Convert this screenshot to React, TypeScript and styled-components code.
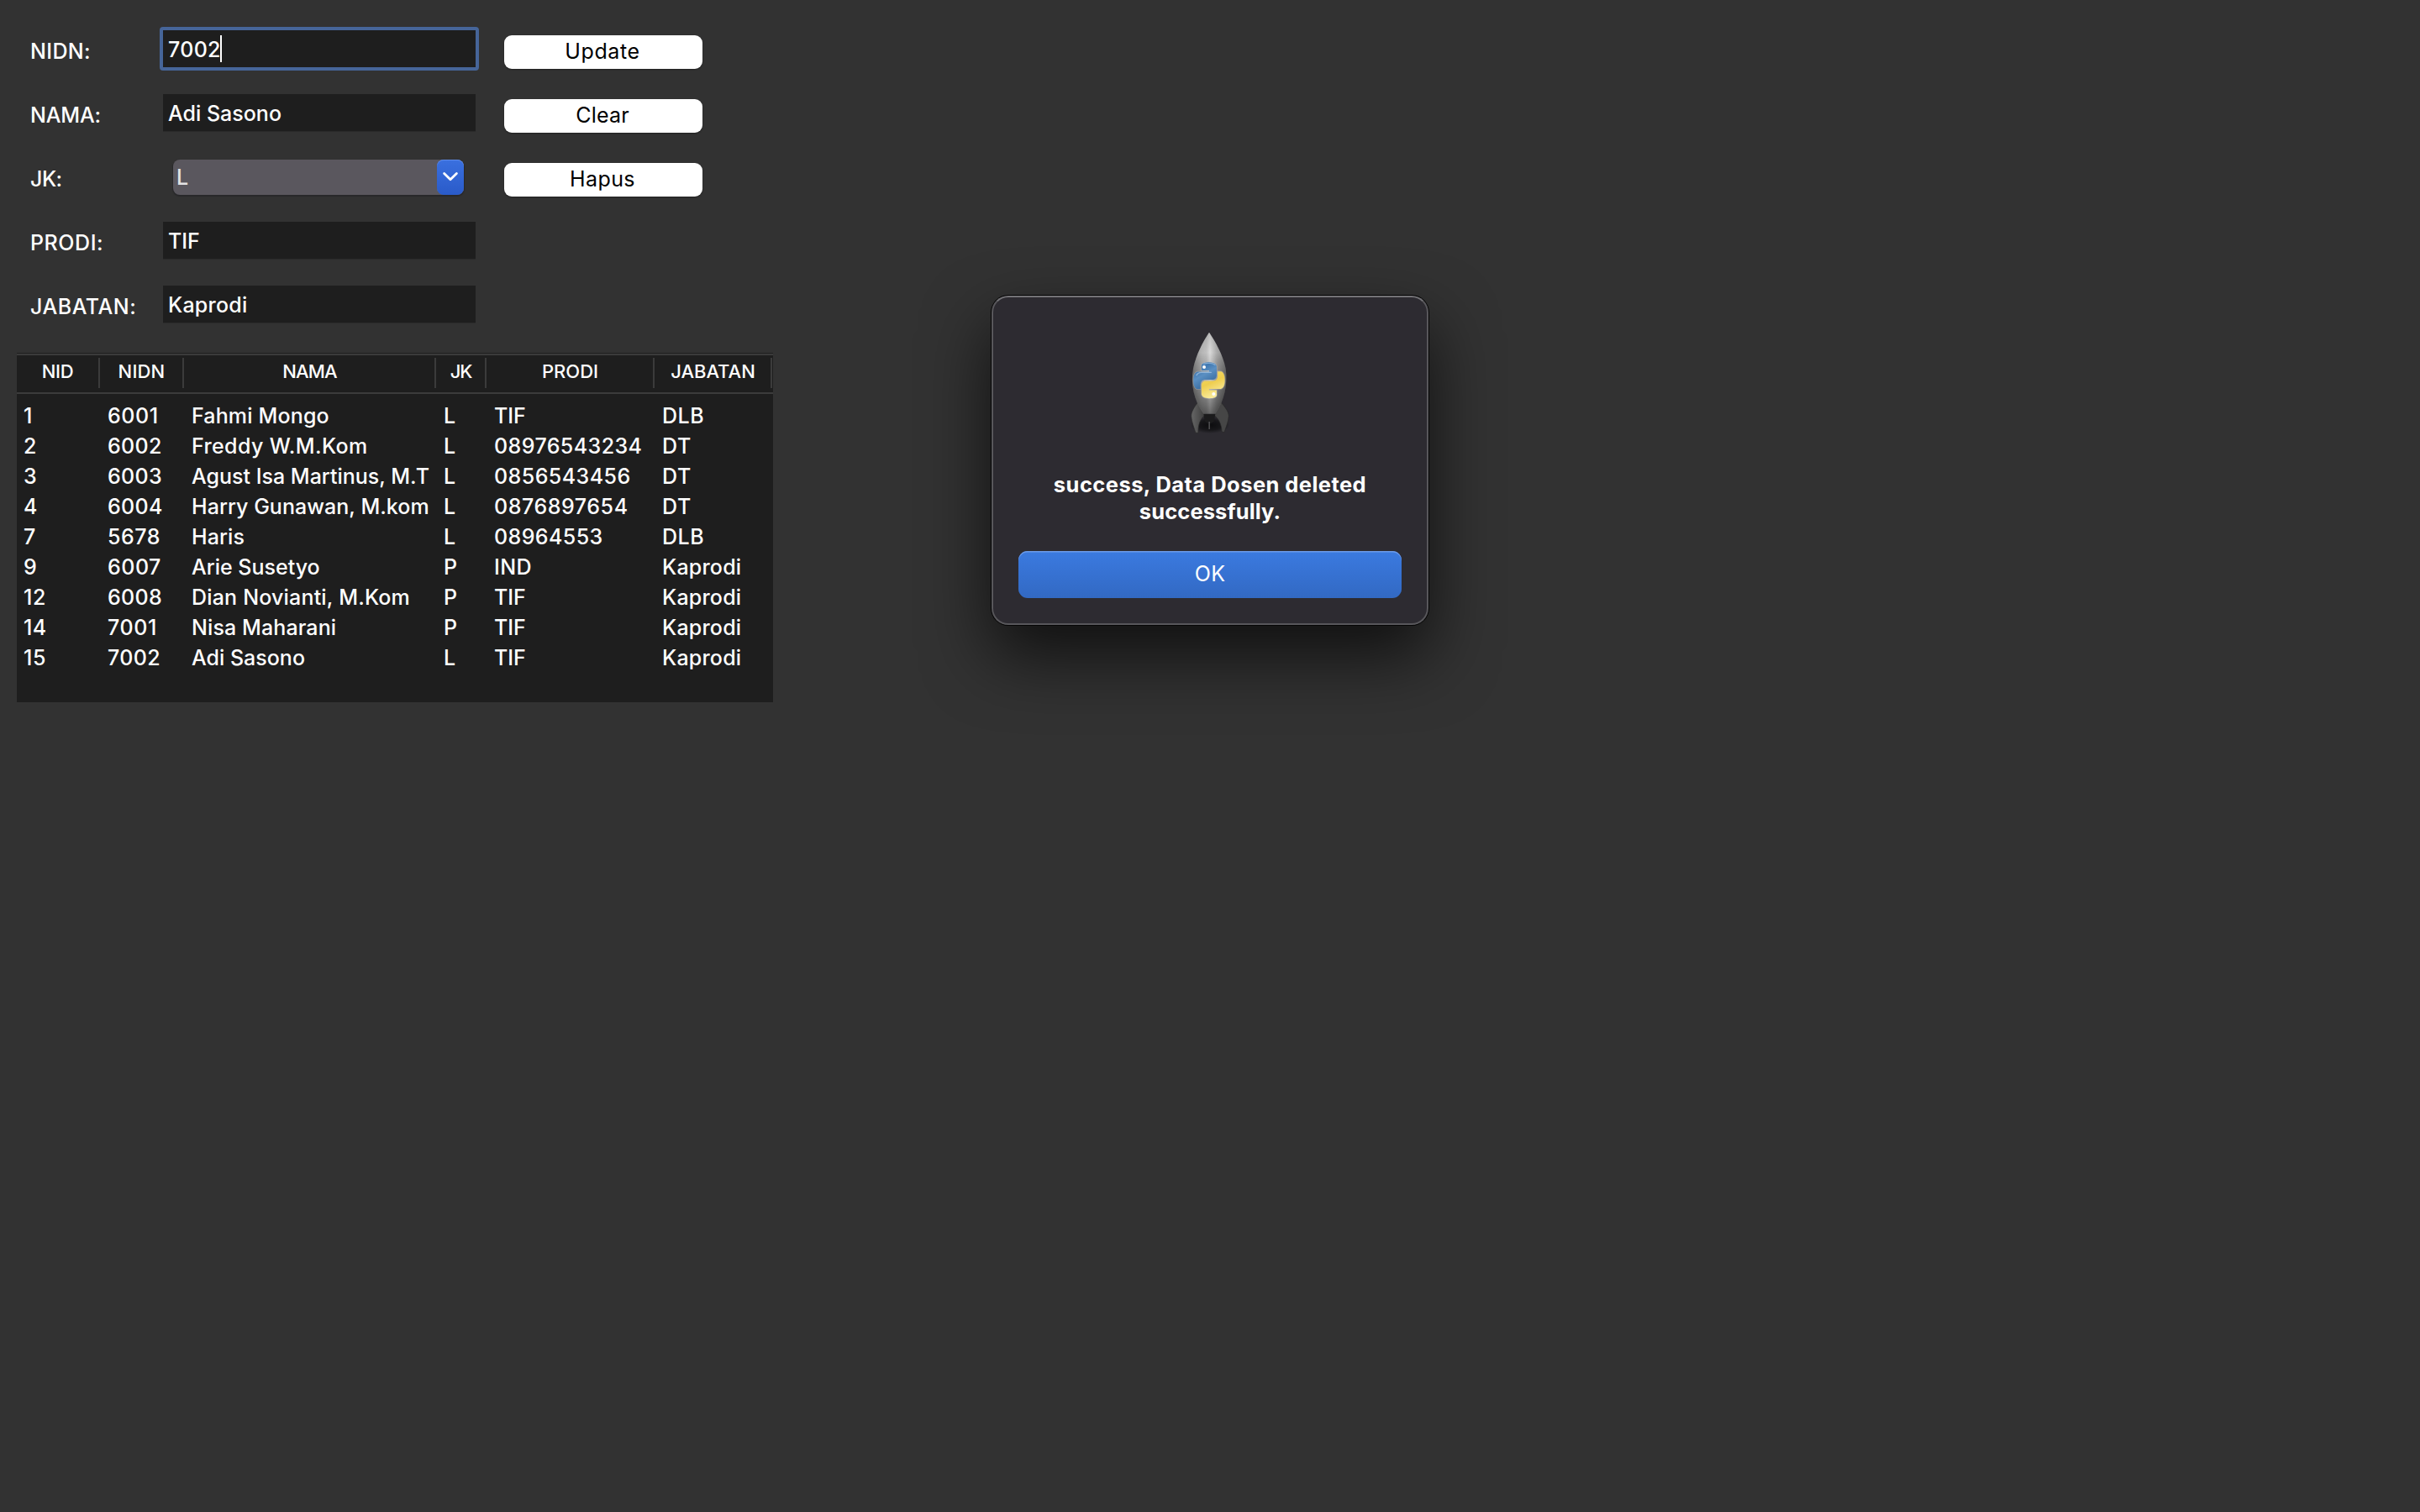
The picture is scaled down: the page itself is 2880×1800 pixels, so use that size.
import React from 'react';
import styled, { createGlobalStyle } from 'styled-components';

const GlobalStyle = createGlobalStyle`
  * { box-sizing: border-box; }
  html, body { margin: 0; background: #323232; }
  body {
    font-family: Inter, "Liberation Sans", sans-serif;
    font-size: 25px;
    font-weight: 500;
    color: #fff;
    overflow: hidden;
  }
`;

const Window = styled.main`
  position: relative;
  width: 2880px;
  height: 1800px;
  padding: 20px 0 0 20px;
  background: #323232;
`;

const Form = styled.form`
  display: flex;
  flex-direction: column;
  margin-bottom: 20px;
`;

const FormRow = styled.div`
  display: flex;
  align-items: center;
  height: 76px;
  padding-left: 16px;
`;

const Tracked = styled.span<{ $track?: number }>`
  letter-spacing: ${(p) => p.$track ?? 0}px;
`;

const Label = styled.label`
  width: 158px;
  line-height: 40px;
  padding-top: 5px;
  white-space: nowrap;
`;

const FieldSlot = styled.div`
  display: flex;
  width: 372px;
  margin-right: 34px;
`;

const Entry = styled.div<{ $focused?: boolean }>`
  display: flex;
  align-items: center;
  width: ${(p) => (p.$focused ? 380 : 372)}px;
  height: ${(p) => (p.$focused ? 52 : 45)}px;
  margin: ${(p) => (p.$focused ? '0 -4px' : '1px 0 0')};
  padding: 2px 0 0 6px;
  background: #1e1e1e;
  border: 0 solid #2a2a2a;
  border-bottom-width: 1px;
  ${(p) => p.$focused && 'border: 4px solid #466599; border-radius: 4px;'}
`;

const Caret = styled.i`
  width: 2px;
  height: 32px;
  margin: -2px 0 0 -1px;
  background: #fff;
`;

const Combo = styled.div`
  display: flex;
  justify-content: space-between;
  width: 346px;
  height: 42px;
  margin: 2px 0 0 12px;
  padding-left: 4px;
  line-height: 42px;
  color: #e3e2e4;
  background: #5a575e;
  border-radius: 8px;
  box-shadow: 0 1px 1px 1px #28282a;
`;

const ComboArrow = styled.span`
  display: grid;
  place-items: center;
  width: 32px;
  height: 42px;
  border-radius: 8px;
  background: linear-gradient(#3a70df, #2a5bc9);
  box-shadow: inset 0 1px 0 #5e8ae6;
`;

const PushButton = styled.button`
  width: 236px;
  height: 40px;
  margin-top: 8px;
  padding: 0 2px 2px 0;
  border: 0;
  border-radius: 9px;
  background: #fff;
  color: #000;
  font: inherit;
  font-weight: 400;
  line-height: 37px;
  box-shadow: 0 1px 2px rgba(0, 0, 0, 0.35);
`;

const Table = styled.section`
  width: 900px;
  height: 416px;
  background: #1e1e1e;
`;

const gridColumns = '100px 100px 300px 60px 200px 140px';

const HeaderRow = styled.div`
  display: grid;
  grid-template-columns: ${gridColumns};
  height: 49px;
  padding-top: 3px;
  border-top: 1px solid #1e1e1e;
  border-bottom: 2px solid #3b3b3b;
  box-shadow: inset 0 2px 0 #3b3b3b;
`;

const HeaderCell = styled.div`
  height: 36px;
  margin: 2px 1px 0 0;
  border-right: 2px solid #3b3b3b;
  font-size: 22px;
  line-height: 32px;
  text-align: center;
`;

const Body = styled.div`
  padding-top: 8px;
`;

const Row = styled.div`
  display: grid;
  grid-template-columns: ${gridColumns};
  height: 36px;
  line-height: 36px;
`;

const Cell = styled.div`
  padding-left: 8px;
  white-space: nowrap;
  overflow: hidden;
`;

const DialogLayer = styled.div`
  position: absolute;
  inset: 0;
  display: flex;
  justify-content: center;
  align-items: flex-start;
  padding-top: 352px;
`;

const Dialog = styled.div`
  display: flex;
  flex-direction: column;
  align-items: center;
  width: 520px;
  height: 392px;
  padding-top: 26px;
  border: 2px solid #58575b;
  border-top-color: #737276;
  border-radius: 20px;
  background: #2d2b31;
  box-shadow: 0 0 0 1px #050505, 0 36px 80px rgba(0, 0, 0, 0.68);
`;

const Message = styled.p`
  display: flex;
  flex-direction: column;
  align-items: center;
  margin: 31px 0 31px;
  font-size: 25.5px;
  font-weight: 700;
  line-height: 32px;
  white-space: nowrap;
`;

const OkButton = styled.button`
  width: 456px;
  height: 56px;
  padding: 0 0 2px;
  border: 0;
  border-radius: 11px;
  background: linear-gradient(#3b7ae0, #3269c3);
  box-shadow: inset 0 1.5px 0 #6c9be9;
  color: #fff;
  font: inherit;
  font-weight: 400;
`;

function ChevronDown() {
  return (
    <svg width="20" height="14" viewBox="0 0 20 14" fill="none">
      <path d="M2.6 2.6 L10 9.8 L17.4 2.6" stroke="#fff" strokeWidth="2.8" strokeLinecap="round" strokeLinejoin="round" />
    </svg>
  );
}

const hullPath =
  'M117 47 C96 78 70 126 60 176 C50 232 62 290 98 338 L138 338 C172 290 184 232 176 176 C166 126 138 78 117 47 Z';

function RocketIcon() {
  return (
    <svg width="80" height="150" viewBox="0 0 240 450">
      <defs>
        <linearGradient id="hull" x1="0" x2="1" y1="0" y2="0">
          <stop offset="0" stopColor="#707070" />
          <stop offset="0.28" stopColor="#a2a2a2" />
          <stop offset="0.42" stopColor="#b0b0b0" />
          <stop offset="0.52" stopColor="#cfcfcf" />
          <stop offset="0.72" stopColor="#939393" />
          <stop offset="1" stopColor="#606060" />
        </linearGradient>
        <linearGradient id="shade" x1="0" x2="0" y1="0" y2="1">
          <stop offset="0" stopColor="#999" stopOpacity="0.35" />
          <stop offset="0.25" stopColor="#fff" stopOpacity="0.22" />
          <stop offset="0.6" stopColor="#000" stopOpacity="0.06" />
          <stop offset="1" stopColor="#000" stopOpacity="0.5" />
        </linearGradient>
        <linearGradient id="finL" x1="0" x2="1" y1="0" y2="0">
          <stop offset="0" stopColor="#666" />
          <stop offset="1" stopColor="#3a3a3a" />
        </linearGradient>
        <linearGradient id="snakeBlue" x1="0" x2="0.5" y1="0" y2="1">
          <stop offset="0" stopColor="#6b9dcd" />
          <stop offset="0.3" stopColor="#3f77b0" />
          <stop offset="0.55" stopColor="#5a8fc2" />
          <stop offset="1" stopColor="#35689c" />
        </linearGradient>
        <linearGradient id="snakeYellow" x1="0" x2="0.4" y1="0" y2="1">
          <stop offset="0" stopColor="#f6de6c" />
          <stop offset="0.5" stopColor="#eecd4e" />
          <stop offset="1" stopColor="#f9eb9c" />
        </linearGradient>
        <radialGradient id="ground">
          <stop offset="0" stopColor="#0c0c0e" />
          <stop offset="0.6" stopColor="#121214" stopOpacity="0.8" />
          <stop offset="1" stopColor="#121214" stopOpacity="0" />
        </radialGradient>
      </defs>
      <ellipse cx="120" cy="378" rx="70" ry="30" fill="url(#ground)" />
      <path d="M76 298 C62 316 53 332 53 346 C54 366 64 390 69 406 L78 406 C77 380 84 354 104 342 L104 320 Z" fill="url(#finL)" stroke="#2a2a2a" strokeWidth="2" />
      <path d="M160 298 C176 316 187 332 187 346 C186 366 176 388 171 404 L162 402 C161 376 152 354 132 342 L132 320 Z" fill="#464646" stroke="#262626" strokeWidth="2" />
      <path d={hullPath} fill="url(#hull)" />
      <path d={hullPath} fill="url(#shade)" />
      <path d="M97 338 L139 338 L134 366 L124 371 L111 371 L102 366 Z" fill="#1b1b1c" />
      <rect x="115" y="366" width="5" height="27" fill="#4b4b4d" />
      <g transform="translate(61 154) scale(4.65 5.35)" stroke="#c0c0c0" strokeOpacity="0.4" strokeWidth="0.9" paintOrder="stroke">
        <path fill="url(#snakeBlue)" d="M14.25.18l.9.2.73.26.59.3.45.32.34.34.25.34.16.33.1.3.04.26.02.2-.01.13V8.5l-.05.63-.13.55-.21.46-.26.38-.3.31-.33.25-.35.19-.35.14-.33.1-.3.07-.26.04-.21.02H8.77l-.69.05-.59.14-.5.22-.41.27-.33.32-.27.35-.2.36-.15.37-.1.35-.07.32-.04.27-.02.21v3.06H3.17l-.21-.03-.28-.07-.32-.12-.35-.18-.36-.26-.36-.36-.35-.46-.32-.59-.28-.73-.21-.88-.14-1.05-.05-1.23.06-1.22.16-1.04.24-.87.32-.71.36-.57.4-.44.42-.33.42-.24.4-.16.36-.1.32-.05.24-.01h.16l.06.01h8.16v-.83H6.18l-.01-2.75-.02-.37.05-.34.11-.31.17-.28.25-.26.31-.23.38-.2.44-.18.51-.15.58-.12.64-.1.71-.06.77-.04.84-.02 1.27.05z" />
        <path fill="url(#snakeYellow)" d="M21.04 6.11l.28.06.32.12.35.18.36.27.36.35.35.47.32.59.28.73.21.88.14 1.04.05 1.23-.06 1.23-.16 1.04-.24.86-.32.71-.36.57-.4.45-.42.33-.42.24-.4.16-.36.09-.32.05-.24.02-.16-.01h-8.22v.82h5.84l.01 2.76.02.36-.05.34-.11.31-.17.29-.25.25-.31.24-.38.2-.44.17-.51.15-.58.13-.64.09-.71.07-.77.04-.84.01-1.27-.04-1.07-.14-.9-.2-.73-.25-.59-.3-.45-.33-.34-.34-.25-.34-.16-.33-.1-.3-.04-.25-.02-.2.01-.13v-5.34l.05-.64.13-.54.21-.46.26-.38.3-.32.33-.24.35-.2.35-.14.33-.1.3-.06.26-.04.21-.02.13-.01h5.84l.69-.05.59-.14.5-.21.41-.28.33-.32.27-.35.2-.36.15-.36.1-.35.07-.32.04-.28.02-.21V6.07h2.09l.14.01z" />
      </g>
      <path d="M72 200 C76 192 82 190 90 190 L124 190" stroke="#a9c8e6" strokeOpacity="0.7" strokeWidth="4" fill="none" strokeLinecap="round" />
      <path d="M98 160 C108 156 128 156 138 163" stroke="#a9c8e6" strokeOpacity="0.6" strokeWidth="4" fill="none" strokeLinecap="round" />
      <circle cx="99" cy="171" r="6" fill="#fff" />
      <circle cx="133" cy="267" r="6" fill="#fff" />
    </svg>
  );
}

type Text = [value: string, track: number];

const columns: Text[] = [
  ['NID', -0.3],
  ['NIDN', 0.16],
  ['NAMA', -0.9],
  ['JK', -1.2],
  ['PRODI', 0],
  ['JABATAN', 0],
];

const rows: Text[][] = [
  [['1', 0], ['6001', 0.6], ['Fahmi Mongo', 0.15], ['L', 0], ['TIF', -0.05], ['DLB', 0.5]],
  [['2', 0], ['6002', 0.33], ['Freddy W.M.Kom', 0.38], ['L', 0], ['08976543234', 0.42], ['DT', 0.8]],
  [['3', 0], ['6003', 0.33], ['Agust Isa Martinus, M.T', 0], ['L', 0], ['0856543456', 0.44], ['DT', 0.8]],
  [['4', 0], ['6004', 0.33], ['Harry Gunawan, M.kom', 0.04], ['L', 0], ['0876897654', 0.56], ['DT', 0.8]],
  [['7', 0], ['5678', 0.5], ['Haris', 0.1], ['L', 0], ['08964553', 0.4], ['DLB', 0.5]],
  [['9', 0], ['6007', 0.5], ['Arie Susetyo', 0], ['P', 0], ['IND', 0.4], ['Kaprodi', 0.2]],
  [['12', 0.6], ['6008', 0.33], ['Dian Novianti, M.Kom', 0.18], ['P', 0], ['TIF', -0.05], ['Kaprodi', 0.2]],
  [['14', 0.3], ['7001', 0.6], ['Nisa Maharani', 0.1], ['P', 0], ['TIF', -0.05], ['Kaprodi', 0.2]],
  [['15', 0.6], ['7002', 0.33], ['Adi Sasono', 0], ['L', 0], ['TIF', -0.05], ['Kaprodi', 0.2]],
];

interface Field {
  label: Text;
  value: Text;
  kind?: 'focused' | 'combo';
  action?: Text;
}

const fields: Field[] = [
  { label: ['NIDN:', 0.35], value: ['7002', 0.3], kind: 'focused', action: ['Update', 0.6] },
  { label: ['NAMA:', -0.17], value: ['Adi Sasono', 0], action: ['Clear', 0.21] },
  { label: ['JK:', -0.5], value: ['L', 0], kind: 'combo', action: ['Hapus', 0.4] },
  { label: ['PRODI:', 0.55], value: ['TIF', -0.05] },
  { label: ['JABATAN:', 0.55], value: ['Kaprodi', 0.24] },
];

function T({ text }: { text: Text }) {
  return <Tracked $track={text[1]}>{text[0]}</Tracked>;
}

export default function App() {
  return (
    <Window>
      <GlobalStyle />
      <Form>
        {fields.map((f) => (
          <FormRow key={f.label[0]}>
            <Label><T text={f.label} /></Label>
            <FieldSlot>
              {f.kind === 'combo' ? (
                <Combo>
                  <T text={f.value} />
                  <ComboArrow><ChevronDown /></ComboArrow>
                </Combo>
              ) : (
                <Entry $focused={f.kind === 'focused'}>
                  <T text={f.value} />
                  {f.kind === 'focused' && <Caret />}
                </Entry>
              )}
            </FieldSlot>
            {f.action && <PushButton type="button"><T text={f.action} /></PushButton>}
          </FormRow>
        ))}
      </Form>
      <Table>
        <HeaderRow>
          {columns.map((c) => (
            <HeaderCell key={c[0]}><T text={c} /></HeaderCell>
          ))}
        </HeaderRow>
        <Body>
          {rows.map((r) => (
            <Row key={r[0][0]}>
              {r.map((c, i) => (
                <Cell key={i}><T text={c} /></Cell>
              ))}
            </Row>
          ))}
        </Body>
      </Table>
      <DialogLayer>
        <Dialog role="alertdialog">
          <RocketIcon />
          <Message>
            <Tracked $track={0.44}>success, Data Dosen deleted</Tracked>
            <Tracked $track={0.12}>successfully.</Tracked>
          </Message>
          <OkButton type="button"><Tracked $track={0.35}>OK</Tracked></OkButton>
        </Dialog>
      </DialogLayer>
    </Window>
  );
}
